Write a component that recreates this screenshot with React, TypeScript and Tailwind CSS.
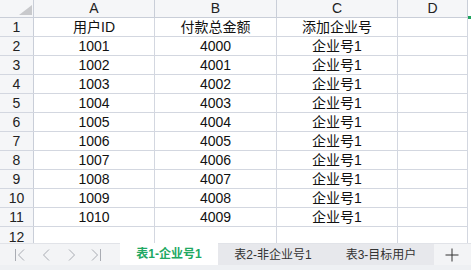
const COLS = ["A", "B", "C", "D"];

const ROWS = [
  ["用户ID", "付款总金额", "添加企业号"],
  ["1001", "4000", "企业号1"],
  ["1002", "4001", "企业号1"],
  ["1003", "4002", "企业号1"],
  ["1004", "4003", "企业号1"],
  ["1005", "4004", "企业号1"],
  ["1006", "4005", "企业号1"],
  ["1007", "4006", "企业号1"],
  ["1008", "4007", "企业号1"],
  ["1009", "4008", "企业号1"],
  ["1010", "4009", "企业号1"],
];

const FONT = "font-['Liberation_Sans','Noto_Sans_CJK_SC',sans-serif]";

function ColHead({ label, w }: { label: string; w: string }) {
  return (
    <div
      className={`${w} h-full flex items-center justify-center border-r border-[#c9ced8] text-[14px] text-[#222]`}
    >
      {label}
    </div>
  );
}

function Cell({ text, w }: { text?: string; w: string }) {
  return (
    <div
      className={`${w} h-full flex items-center justify-center border-r border-[#d3d7e0] text-[14px] text-[#111]`}
    >
      {text}
    </div>
  );
}

function RowNum({ n }: { n: number }) {
  return (
    <div className="w-[34px] h-full flex items-center justify-center bg-[#f5f6f8] border-r border-[#c9ced8] text-[14px] text-[#222]">
      {n}
    </div>
  );
}

const WIDTHS = ["w-[121px]", "w-[122px]", "w-[121px]", "w-[70px]"];

function NavIcon({ d }: { d: string }) {
  return (
    <svg width="12" height="14" viewBox="0 0 12 14" fill="none">
      <path d={d} stroke="#a9acb3" strokeWidth="1" />
    </svg>
  );
}

export default function App() {
  return (
    <div className={`w-[471px] h-[270px] bg-white overflow-hidden flex flex-col ${FONT}`}>
      {/* column header */}
      <div className="h-[18px] flex shrink-0">
        <div className="w-[34px] h-full bg-[#f5f6f8] border-r border-b border-[#c9ced8] flex items-end justify-end pr-[1px] pb-[2px]">
          <svg width="13" height="10" viewBox="0 0 13 10">
            <polygon points="0,10 13,10 13,0" fill="#c8c9cc" />
          </svg>
        </div>
        <div className="flex bg-[#f5f6f8] border-b border-[#c9ced8]">
          {COLS.map((c, i) => (
            <ColHead key={c} label={c} w={WIDTHS[i]} />
          ))}
        </div>
        <div className="relative flex-1">
          <div className="absolute left-0 top-[16px] w-[3px] h-[3px] bg-[#1fa35f]" />
        </div>
      </div>

      {ROWS.map((r, ri) => (
        <div key={ri} className="h-[19px] flex shrink-0">
          <div className="flex border-b border-[#d3d7e0]">
            <RowNum n={ri + 1} />
            {WIDTHS.map((w, ci) => (
              <Cell key={ci} w={w} text={r[ci]} />
            ))}
          </div>
        </div>
      ))}

      {/* row 12, partially visible */}
      <div className="h-[16px] flex shrink-0">
        <div className="flex">
          <div className="w-[34px] h-full flex items-start justify-center bg-[#f5f6f8] border-r border-[#c9ced8] text-[14px] text-[#222] leading-[20px]">
            12
          </div>
          {WIDTHS.map((w, ci) => (
            <div key={ci} className={`${w} h-full border-r border-[#d3d7e0]`} />
          ))}
        </div>
      </div>

      {/* sheet tabs */}
      <div className="h-[22px] flex shrink-0 bg-[#f3f4f6] border-t border-[#e1e3e8]">
        <div className="w-[120px] flex items-center">
          <div className="ml-[14px]">
            <NavIcon d="M1.5 1v12M10 1.5L4.5 7l5.5 5.5" />
          </div>
          <div className="ml-[15px]">
            <NavIcon d="M8 1.5L2.5 7L8 12.5" />
          </div>
          <div className="ml-[13px]">
            <NavIcon d="M3 1.5L8.5 7L3 12.5" />
          </div>
          <div className="ml-[12px]">
            <NavIcon d="M2 1.5L7.5 7L2 12.5M10.5 1v12" />
          </div>
        </div>
        <div className="w-[98px] bg-white flex items-center justify-center text-[12px] font-bold text-[#21a862] -mt-[1px]">
          表1-企业号1
        </div>
        <div className="w-[110px] bg-[#e7e8ec] flex items-center justify-center text-[12px] text-[#333]">
          表2-非企业号1
        </div>
        <div className="w-[106px] bg-[#e7e8ec] flex items-center justify-center text-[12px] text-[#333]">
          表3-目标用户
        </div>
        <div className="flex-1 flex items-center justify-center pr-[2px]">
          <svg width="14" height="14" viewBox="0 0 14 14">
            <path d="M7 0.5v13M0.5 7h13" stroke="#333" strokeWidth="1" />
          </svg>
        </div>
      </div>
      <div className="flex-1 bg-[#eef0f3]" />
    </div>
  );
}
